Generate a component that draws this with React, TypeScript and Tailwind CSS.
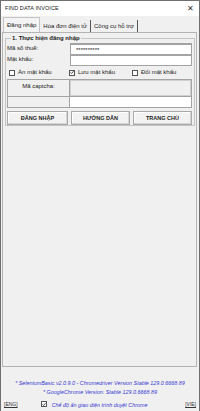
import React from 'react';

const font = { fontFamily: '"Liberation Sans", Arial, sans-serif' };

const Check: React.FC<{ checked?: boolean }> = ({ checked }) => (
    <span className="inline-flex items-center justify-center w-[6px] h-[6px] border border-[#555] bg-white shrink-0">
        {checked && (
            <svg width="5" height="5" viewBox="0 0 5 5">
                <path d="M0.6 2.4 L2 3.8 L4.4 0.8" stroke="#222" strokeWidth="1" fill="none" />
            </svg>
        )}
    </span>
);

const Btn: React.FC<{ label: string; w: string }> = ({ label, w }) => (
    <div className={`${w} h-[14px] flex items-center justify-center border border-[#a9a9a9] bg-[#f2f2f2] shadow-[inset_-1px_-1px_0_#d6d6d6,inset_1px_1px_0_#ffffff] text-[5.5px] font-bold text-[#222]`}>
        {label}
    </div>
);

export default function App() {
    return (
        <div style={font} className="w-[200px] h-[411px] bg-[#f0f0f0] border-x border-t border-[#6f6f6f] flex flex-col text-[#222] overflow-hidden">
            {/* title bar */}
            <div className="h-[15px] bg-white flex items-center justify-between pl-[4px] pr-[5px]">
                <span className="text-[5.5px] tracking-[0.1px]">FIND DATA INVOICE</span>
                <span className="text-[8px] leading-none text-[#333]">✕</span>
            </div>

            {/* tabs */}
            <div className="h-[16px] flex items-end pl-[2px]">
                <div className="h-[15px] px-[3px] flex items-center border-x border-t border-[#c4c4c4] bg-[#f4f4f4] text-[6px]">Đăng nhập</div>
                <div className="h-[12px] px-[3px] flex items-center border-r border-[#555] text-[6px]">Hóa đơn điện tử</div>
                <div className="h-[12px] px-[3px] flex items-center border-r border-[#555] text-[6px]">Công cụ hỗ trợ</div>
            </div>

            {/* tab panel */}
            <div className="ml-[1px] mr-[2px] h-[335px] border border-[#b4b4b4] bg-[#f0f0f0] pt-[5px] pl-[2px] pr-[1px]">
                <div className="relative border border-[#c4c4c4] h-[88px] px-[1px] pt-[4px]">
                    <span className="absolute -top-[5px] left-[5px] px-[1px] bg-[#f0f0f0] text-[6px] font-bold leading-[8px]">1. Thực hiện đăng nhập</span>

                    <div className="flex items-stretch">
                        <div className="w-[63px] flex flex-col text-[6px]">
                            <div className="h-[11px] flex items-center">Mã số thuế:</div>
                            <div className="h-[11px] flex items-center">Mật khẩu:</div>
                        </div>
                        <div className="flex-1 mr-[1px] flex flex-col">
                            <div className="h-[11px] border-t-2 border-x border-[#a3a3a3] bg-white flex items-center pl-[5px] text-[6px] leading-none pt-[1px]">**********</div>
                            <div className="h-[12px] border-t-2 border-x border-b border-[#a3a3a3] bg-white"></div>
                        </div>
                    </div>

                    <div className="h-[11px] flex items-center text-[6px] mt-[1px]">
                        <div className="w-[62px] flex items-center gap-[3px] pl-[2px]"><Check /> Ẩn mật khẩu</div>
                        <div className="w-[63px] flex items-center gap-[3px]"><Check checked /> Lưu mật khẩu</div>
                        <div className="flex items-center gap-[3px]"><Check /> Đổi mật khẩu</div>
                    </div>

                    <div className="mt-[1px] mr-[1px] border border-[#a3a3a3] flex flex-col">
                        <div className="h-[17px] flex border-b border-[#a3a3a3]">
                            <div className="w-[62px] border-r border-[#a3a3a3] text-[6px] text-center pt-[2px]">Mã captcha:</div>
                            <div className="flex-1 border border-[#cfcfcf]"></div>
                        </div>
                        <div className="h-[10px] flex">
                            <div className="w-[62px] border-r border-[#a3a3a3]"></div>
                            <div className="flex-1 bg-white"></div>
                        </div>
                    </div>

                    <div className="mt-[3px] mr-[1px] flex gap-[3px]">
                        <Btn label="ĐĂNG NHẬP" w="w-[61px]" />
                        <Btn label="HƯỚNG DẪN" w="w-[59px]" />
                        <Btn label="TRANG CHỦ" w="flex-1" />
                    </div>
                </div>
            </div>

            {/* status */}
            <div className="flex-1 flex flex-col text-[#3a3ad0] italic text-[5.4px] pt-[12px]">
                <div className="h-[9px] flex items-center justify-center whitespace-nowrap">* SeleniumBasic v2.0.9.0 - Chromedriver Version Stable 129.0.6668.89</div>
                <div className="h-[9px] flex items-center justify-center whitespace-nowrap">* GoogleChrome Version: Stable 129.0.6668.89</div>
                <div className="mt-[3px] h-[10px] flex items-center px-[3px]">
                    <span className="not-italic text-[#333] underline text-[5px]">[ENG]</span>
                    <span className="ml-[23px]"><Check checked /></span>
                    <span className="ml-[5px]">Chế độ ẩn giao diện trình duyệt Chrome</span>
                    <span className="ml-auto not-italic text-[#333] underline text-[5px]">[VIE]</span>
                </div>
            </div>
        </div>
    );
}
